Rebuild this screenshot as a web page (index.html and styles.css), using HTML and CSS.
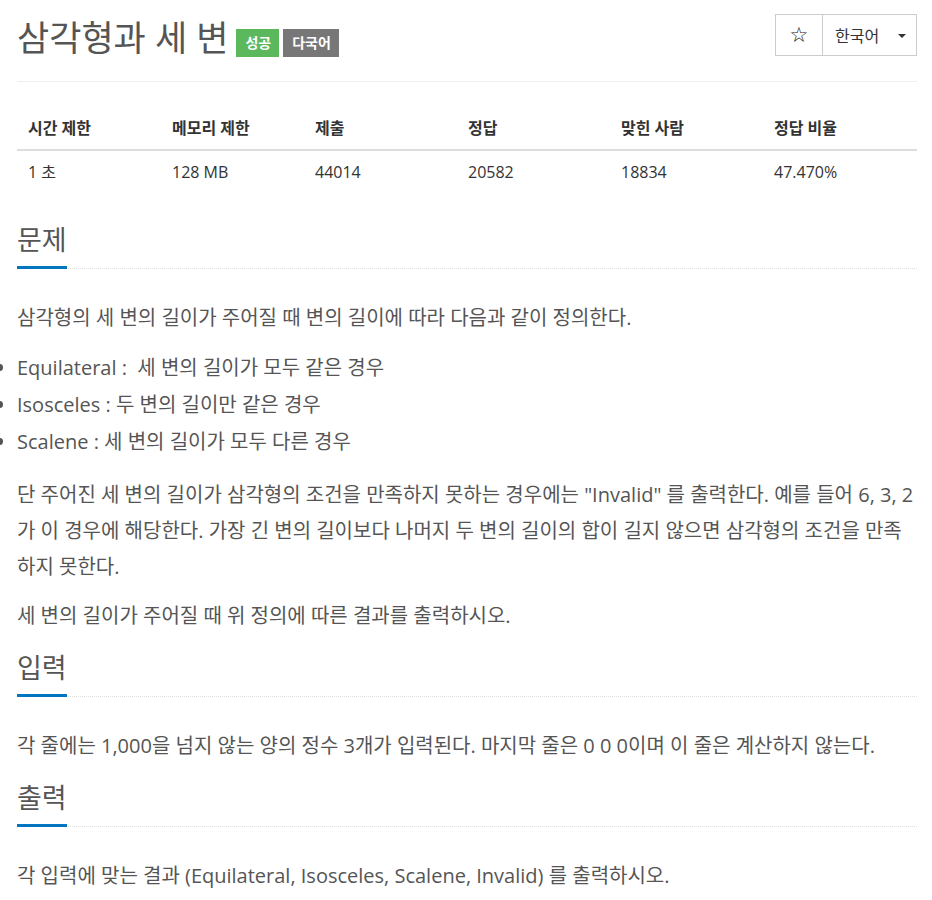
FILE: index.html
```html
<!DOCTYPE html>
<html lang="ko">
<head>
    <meta charset="UTF-8">
    <meta name="viewport" content="width=device-width, initial-scale=1.0">
    <title>삼각형과 세 변</title>
    <link rel="stylesheet" href="styles.css">
</head>
<body>
    <div class="container">
        <!-- Title -->
        <div class="page-header">
            <h1>
                <span class="problem-title">삼각형과 세 변</span>
                <span class="label label-success">성공</span>
                <span class="label label-default">다국어</span>
            </h1>
            <div class="btn-group">
                <button class="btn btn-star">&#9734;</button>
                <button class="btn btn-lang">한국어 <span class="caret"></span></button>
            </div>
        </div>

        <!-- Info table -->
        <table class="info-table">
            <colgroup>
                <col class="col-a">
                <col class="col-b">
                <col class="col-c">
                <col class="col-c">
                <col class="col-c">
                <col class="col-d">
            </colgroup>
            <thead>
                <tr>
                    <th>시간 제한</th>
                    <th>메모리 제한</th>
                    <th>제출</th>
                    <th>정답</th>
                    <th>맞힌 사람</th>
                    <th>정답 비율</th>
                </tr>
            </thead>
            <tbody>
                <tr>
                    <td>1 초</td>
                    <td>128 MB</td>
                    <td>44014</td>
                    <td>20582</td>
                    <td>18834</td>
                    <td>47.470%</td>
                </tr>
            </tbody>
        </table>

        <!-- Problem -->
        <section class="problem-section first">
            <div class="headline"><h2>문제</h2></div>
            <div class="problem-text">
                <p>삼각형의 세 변의 길이가 주어질 때 변의 길이에 따라 다음과 같이 정의한다.</p>
                <ul>
                    <li>Equilateral :&nbsp; 세 변의 길이가 모두 같은 경우</li>
                    <li>Isosceles : 두 변의 길이만 같은 경우</li>
                    <li>Scalene : 세 변의 길이가 모두 다른 경우</li>
                </ul>
                <p>단 주어진 세 변의 길이가 삼각형의 조건을 만족하지 못하는 경우에는 "Invalid" 를 출력한다. 예를 들어 6, 3, 2가 이 경우에 해당한다. 가장 긴 변의 길이보다 나머지 두 변의 길이의 합이 길지 않으면 삼각형의 조건을 만족하지 못한다.</p>
                <p>세 변의 길이가 주어질 때 위 정의에 따른 결과를 출력하시오.</p>
            </div>
        </section>

        <section class="problem-section">
            <div class="headline"><h2>입력</h2></div>
            <div class="problem-text">
                <p>각 줄에는 1,000을 넘지 않는 양의 정수 3개가 입력된다. 마지막 줄은 0 0 0이며 이 줄은 계산하지 않는다.</p>
            </div>
        </section>

        <section class="problem-section">
            <div class="headline"><h2>출력</h2></div>
            <div class="problem-text">
                <p>각 입력에 맞는 결과 (Equilateral, Isosceles, Scalene, Invalid) 를 출력하시오.</p>
            </div>
        </section>
    </div>
</body>
</html>
```

FILE: styles.css
```css
body {
    font-family: 'Open Sans', 'Noto Sans CJK KR', sans-serif;
    color: #555;
    background-color: #fff;
    margin: 0;
    padding: 0;
}

.container {
    width: 900px;
    padding: 0 15px 0 17px;
}

/* header */
.page-header {
    display: flex;
    justify-content: space-between;
    align-items: flex-start;
    border-bottom: 1px solid #eee;
    padding-top: 14px;
    height: 67px;
}

.page-header h1 {
    margin: 0;
    font-size: 35px;
    font-weight: 400;
    line-height: 46px;
    color: #555;
    display: flex;
    align-items: center;
    margin-top: 1px;
}

.problem-title {
    margin-right: 8px;
}

.label {
    font-size: 14px;
    font-weight: 600;
    color: #fff;
    line-height: 18px;
    padding: 5px 8px 5px 9px;
    margin-right: 4px;
    margin-top: 9px;
}

.label-success {
    background-color: #5cb85c;
}

.label-default {
    background-color: #777;
}

.btn-group {
    display: flex;
    border: 1px solid #ccc;
    height: 40px;
}

.btn {
    font-family: 'Open Sans', 'Noto Sans CJK KR', sans-serif;
    background-color: #fff;
    border: none;
    color: #333;
    font-size: 16px;
    padding: 0;
    cursor: pointer;
}

.btn-star {
    width: 47px;
    border-right: 1px solid #ccc;
    font-family: 'DejaVu Sans', sans-serif;
    font-size: 21px;
    color: #111;
}

.btn-lang {
    width: 93px;
    display: flex;
    align-items: center;
    justify-content: flex-start;
    padding-left: 12px;
    gap: 19px;
}

.caret {
    width: 0;
    height: 0;
    border-left: 4px solid transparent;
    border-right: 4px solid transparent;
    border-top: 4px solid #333;
    margin-top: 2px;
}

/* table */
.info-table {
    width: 900px;
    table-layout: fixed;
    border-collapse: collapse;
    margin-top: 24px;
    font-size: 16px;
    color: #333;
}

.col-a {
    width: 144px;
}

.col-b {
    width: 143px;
}

.col-c {
    width: 153px;
}

.col-d {
    width: 154px;
}

.info-table th,
.info-table td {
    text-align: left;
    padding: 8px 10px 8px 11px;
    line-height: 22px;
}

.info-table th {
    font-weight: 700;
    height: 27px;
    border-bottom: 2px solid #ddd;
}

.info-table td {
    height: 26px;
}

/* sections */
.problem-section {
    margin-top: 17px;
}

.problem-section.first {
    margin-top: 30px;
}

.headline {
    border-bottom: 1px dotted #e0e0e0;
}

.headline h2 {
    display: inline-block;
    margin: 0 0 -1px 0;
    font-size: 27px;
    font-weight: 400;
    line-height: 34px;
    padding-bottom: 9px;
    border-bottom: 3px solid #0076c0;
    color: #555;
}

.problem-text {
    font-size: 20px;
    line-height: 36px;
    padding-top: 31px;
}

.problem-text p {
    margin: 0 0 13px 0;
}

.problem-text ul {
    margin: 0 0 17px 0;
    padding: 0;
}

.problem-text ul li {
    line-height: 37px;
}
```
